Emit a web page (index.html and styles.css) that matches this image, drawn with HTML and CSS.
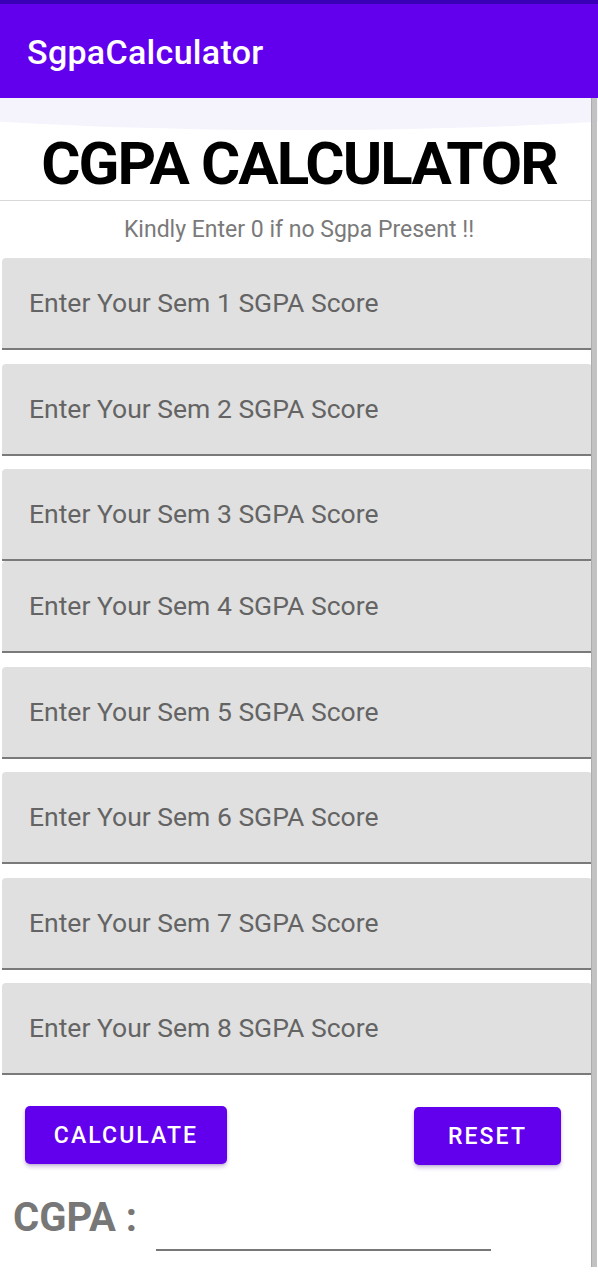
FILE: index.html
```html
<!DOCTYPE html>
<html>
<head>
<meta charset="utf-8">
<title>SgpaCalculator</title>
<link rel="stylesheet" href="styles.css">
</head>
<body>
<div class="screen">
  <header class="appbar">
    <span class="appbar-title">SgpaCalculator</span>
  </header>
  <div class="glow"></div>
  <div class="scrollbar"></div>
  <main class="content">
    <h1 class="heading">CGPA CALCULATOR</h1>
    <div class="divider"></div>
    <p class="hint">Kindly Enter 0 if no Sgpa Present !!</p>
    <div class="fields">
      <div class="field">Enter Your Sem 1 SGPA Score</div>
      <div class="field">Enter Your Sem 2 SGPA Score</div>
      <div class="field field-tight">Enter Your Sem 3 SGPA Score</div>
      <div class="field">Enter Your Sem 4 SGPA Score</div>
      <div class="field">Enter Your Sem 5 SGPA Score</div>
      <div class="field">Enter Your Sem 6 SGPA Score</div>
      <div class="field">Enter Your Sem 7 SGPA Score</div>
      <div class="field field-last">Enter Your Sem 8 SGPA Score</div>
    </div>
    <div class="actions">
      <button class="btn btn-calc">CALCULATE</button>
      <button class="btn btn-reset">RESET</button>
    </div>
    <div class="result">
      <span class="result-label">CGPA :</span>
      <div class="result-value"></div>
    </div>
  </main>
</div>
</body>
</html>
```
FILE: styles.css
```css
* { box-sizing: border-box; }
html, body {
  margin: 0;
  padding: 0;
  background: #ffffff;
  font-family: Roboto, "Noto Sans", "Liberation Sans", sans-serif;
}
.screen {
  position: relative;
  width: 598px;
  min-height: 1280px;
  overflow: hidden;
  background: #ffffff;
}
.appbar {
  position: relative;
  z-index: 5;
  height: 98px;
  border-top: 4px solid #3a00b8;
  background: #6200ee;
  display: flex;
  align-items: center;
  padding-left: 27px;
}
.appbar-title {
  color: #ffffff;
  font-size: 34px;
  font-weight: 500;
  margin-top: 2px;
  letter-spacing: 0.3px;
}
.glow {
  position: absolute;
  top: 66px;
  left: -140px;
  width: 878px;
  height: 64px;
  border-radius: 50%;
  background: #f5f3fc;
  z-index: 1;
}
.scrollbar {
  position: absolute;
  top: 98px;
  right: 1px;
  width: 6px;
  height: 1169px;
  background: #c2c2c2;
  border-left: 1px solid #acacac;
  z-index: 3;
}
.content {
  position: relative;
  z-index: 2;
}
.heading {
  margin: 31px 0 0;
  font-size: 60px;
  font-weight: 700;
  color: #000000;
  text-align: center;
  line-height: 70px;
  height: 71px;
  letter-spacing: -1.9px;
}
.divider {
  height: 1px;
  background: #d8d8d8;
  margin-right: 6px;
}
.hint {
  margin: 15px 0 0;
  font-size: 23px;
  color: #7a7a7a;
  text-align: center;
  line-height: 27px;
  height: 27px;
}
.fields {
  margin-top: 15px;
  padding: 0 6px 0 2px;
}
.field {
  height: 92px;
  background: #e0e0e0;
  border-bottom: 2px solid #7a7a7a;
  border-radius: 4px 4px 0 0;
  margin-bottom: 13.5px;
  display: flex;
  align-items: center;
  padding-left: 27px;
  font-size: 26.5px;
  color: #646464;
  padding-bottom: 1px;
}
.field-tight { margin-bottom: 0; }
.field-last { margin-bottom: 0; }
.actions {
  display: flex;
  justify-content: space-between;
  align-items: flex-start;
  padding: 0 37px 0 25px;
  margin-top: 31px;
}
.btn {
  border: none;
  background: #6200ee;
  color: #ffffff;
  font-family: Roboto, "Noto Sans", "Liberation Sans", sans-serif;
  font-size: 23px;
  font-weight: 500;
  letter-spacing: 2.1px;
  border-radius: 5px;
  height: 58px;
  padding: 0;
  box-shadow: 0 3px 4px rgba(60, 0, 140, 0.22), 0 1px 2px rgba(0, 0, 0, 0.12);
}
.btn-calc { width: 202px; }
.btn-reset { width: 147px; margin-top: 1px; }
.result {
  display: flex;
  align-items: flex-start;
  padding-left: 13px;
  margin-top: 29px;
}
.result-label {
  font-size: 40px;
  font-weight: 700;
  color: #777777;
  line-height: 47px;
}
.result-value {
  width: 335px;
  height: 57px;
  border-bottom: 2px solid #777777;
  margin-left: 19px;
}
```
